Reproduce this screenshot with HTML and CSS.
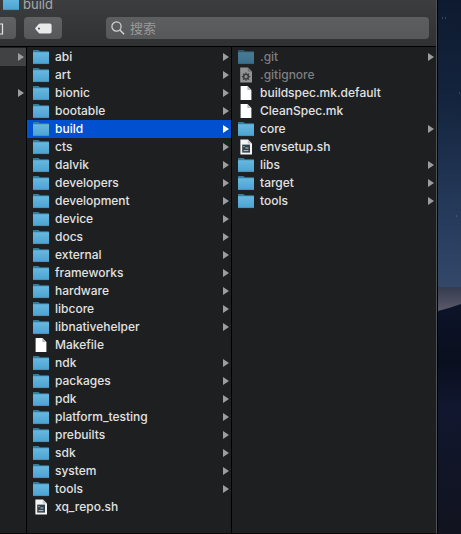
FILE: index.html
```
<!DOCTYPE html>
<html lang="zh-CN">
<head>
<meta charset="UTF-8">
<meta name="viewport" content="width=device-width, initial-scale=1">
<title>build</title>
<link rel="stylesheet" href="styles.css">
</head>
<body>
<svg class="sprite" aria-hidden="true">
  <defs>
    <linearGradient id="folder-fill" x1="0" y1="0" x2="0" y2="1">
      <stop offset="0" stop-color="#67b9df"/>
      <stop offset="1" stop-color="#4ba3d2"/>
    </linearGradient>
  </defs>
  <symbol id="folder" viewBox="0 0 16 16">
    <path d="M0 1.600q0-.6.6-.6h4.800l1.600 1.300h8.400q.6 0 .6.6V6H0z" fill="#347f9f"/>
    <path d="M0 3.200h16v11.300q0 .5-.5.5H.5q-.5 0-.5-.5z" fill="url(#folder-fill)"/>
    <path d="M0 14.600h16" stroke="#3a8fbe" stroke-width=".8"/>
  </symbol>
  <symbol id="doc" viewBox="0 0 16 16">
    <path d="M2.600 1h6.800l4 4v10H2.600z" fill="#fff"/>
    <path d="M9.400 1v4h4z" fill="#b9babb"/>
  </symbol>
  <symbol id="script" viewBox="0 0 16 16">
    <path d="M2.400.4h7.600l4 4v11.200H2.400z" fill="#f4f4f4"/>
    <path d="M9.800.6v3.800h4z" fill="#c4c5c6"/>
    <path d="M4.200 5.600h7.800v8H4.200z" fill="#33424c"/>
    <path d="M5.400 7.600h1.200M7.400 9h3M5.600 11.600h4.800" stroke="#c8d0d4" stroke-width=".9"/>
  </symbol>
  <symbol id="config" viewBox="0 0 16 16">
    <path d="M2.200.4h7.800l4 4v11.200H2.200z" fill="#929394"/>
    <path d="M9.800.4v4.200H14z" fill="#6d6e6f"/>
    <circle cx="8" cy="9.600" r="2.400" fill="none" stroke="#3b3c3e" stroke-width="1.600"/>
    <path d="M8 5.400v1.400M8 12.400v1.400M3.800 9.600h1.400M10.800 9.600h1.400M5 6.600l1 1M10 11.600l1 1M11 6.600l-1 1M6 11.600l-1 1" stroke="#3b3c3e" stroke-width="1.300"/>
  </symbol>
</svg>

<main class="window">
  <header class="toolbar">
    <h1 class="title"><svg class="icon"><use href="#folder"/></svg>build</h1>
    <div class="tools">
      <button class="tool share" type="button" aria-label="共享">
        <svg width="8" height="14" viewBox="0 0 8 14"><path d="M0 3h6.500v10H0" fill="none" stroke="#e6e6e7" stroke-width="1.200"/></svg>
      </button>
      <button class="tool tag" type="button" aria-label="标签">
        <svg width="17" height="11" viewBox="0 0 17 11"><path fill-rule="evenodd" d="M5.200.4h9.600q1.800 0 1.800 1.800v6.600q0 1.800-1.800 1.800H5.200q-.8 0-1.400-.6L.7 6.500q-.9-1 0-2L3.800 1Q4.400.4 5.200.4zM4 4.400a1.100 1.100 0 1 0 .01 0z" fill="#e9e9ea"/></svg>
      </button>
      <label class="search">
        <svg width="14" height="14" viewBox="0 0 14 14"><circle cx="5.500" cy="5.500" r="4.600" fill="none" stroke="#d6d6d7" stroke-width="1.200"/><path d="M8.900 8.900l4.200 4.300" stroke="#d6d6d7" stroke-width="1.400"/></svg>
        <input type="search" placeholder="搜索" aria-label="搜索">
      </label>
    </div>
  </header>

  <div class="columns">
    <ul class="column parent">
      <li class="dir current"></li>
      <li></li>
      <li class="dir"></li>
    </ul>

    <ul class="column">
      <li class="dir"><a href="#"><svg class="icon"><use href="#folder"/></svg>abi</a></li>
      <li class="dir"><a href="#"><svg class="icon"><use href="#folder"/></svg>art</a></li>
      <li class="dir"><a href="#"><svg class="icon"><use href="#folder"/></svg>bionic</a></li>
      <li class="dir"><a href="#"><svg class="icon"><use href="#folder"/></svg>bootable</a></li>
      <li class="dir selected"><a href="#"><svg class="icon"><use href="#folder"/></svg>build</a></li>
      <li class="dir"><a href="#"><svg class="icon"><use href="#folder"/></svg>cts</a></li>
      <li class="dir"><a href="#"><svg class="icon"><use href="#folder"/></svg>dalvik</a></li>
      <li class="dir"><a href="#"><svg class="icon"><use href="#folder"/></svg>developers</a></li>
      <li class="dir"><a href="#"><svg class="icon"><use href="#folder"/></svg>development</a></li>
      <li class="dir"><a href="#"><svg class="icon"><use href="#folder"/></svg>device</a></li>
      <li class="dir"><a href="#"><svg class="icon"><use href="#folder"/></svg>docs</a></li>
      <li class="dir"><a href="#"><svg class="icon"><use href="#folder"/></svg>external</a></li>
      <li class="dir"><a href="#"><svg class="icon"><use href="#folder"/></svg>frameworks</a></li>
      <li class="dir"><a href="#"><svg class="icon"><use href="#folder"/></svg>hardware</a></li>
      <li class="dir"><a href="#"><svg class="icon"><use href="#folder"/></svg>libcore</a></li>
      <li class="dir"><a href="#"><svg class="icon"><use href="#folder"/></svg>libnativehelper</a></li>
      <li><a href="#"><svg class="icon"><use href="#doc"/></svg>Makefile</a></li>
      <li class="dir"><a href="#"><svg class="icon"><use href="#folder"/></svg>ndk</a></li>
      <li class="dir"><a href="#"><svg class="icon"><use href="#folder"/></svg>packages</a></li>
      <li class="dir"><a href="#"><svg class="icon"><use href="#folder"/></svg>pdk</a></li>
      <li class="dir"><a href="#"><svg class="icon"><use href="#folder"/></svg>platform_testing</a></li>
      <li class="dir"><a href="#"><svg class="icon"><use href="#folder"/></svg>prebuilts</a></li>
      <li class="dir"><a href="#"><svg class="icon"><use href="#folder"/></svg>sdk</a></li>
      <li class="dir"><a href="#"><svg class="icon"><use href="#folder"/></svg>system</a></li>
      <li class="dir"><a href="#"><svg class="icon"><use href="#folder"/></svg>tools</a></li>
      <li><a href="#"><svg class="icon"><use href="#script"/></svg>xq_repo.sh</a></li>
    </ul>

    <ul class="column">
      <li class="dir hidden-dir"><a href="#"><svg class="icon"><use href="#folder"/></svg>.git</a></li>
      <li class="hidden-file"><a href="#"><svg class="icon"><use href="#config"/></svg>.gitignore</a></li>
      <li><a href="#"><svg class="icon"><use href="#doc"/></svg>buildspec.mk.default</a></li>
      <li><a href="#"><svg class="icon"><use href="#doc"/></svg>CleanSpec.mk</a></li>
      <li class="dir"><a href="#"><svg class="icon"><use href="#folder"/></svg>core</a></li>
      <li><a href="#"><svg class="icon"><use href="#script"/></svg>envsetup.sh</a></li>
      <li class="dir"><a href="#"><svg class="icon"><use href="#folder"/></svg>libs</a></li>
      <li class="dir"><a href="#"><svg class="icon"><use href="#folder"/></svg>target</a></li>
      <li class="dir"><a href="#"><svg class="icon"><use href="#folder"/></svg>tools</a></li>
    </ul>
  </div>
</main>

<aside class="desktop" aria-hidden="true">
  <svg viewBox="0 0 23 534" preserveAspectRatio="none">
    <defs>
      <linearGradient id="sky" x1="0" y1="0" x2="0" y2="1">
        <stop offset="0" stop-color="#0e1a2f"/>
        <stop offset=".35" stop-color="#14243e"/>
        <stop offset=".75" stop-color="#263b5b"/>
        <stop offset="1" stop-color="#34496a"/>
      </linearGradient>
      <linearGradient id="dune" x1="0" y1="0" x2="0" y2="1">
        <stop offset="0" stop-color="#363b50"/>
        <stop offset="1" stop-color="#5a5a69"/>
      </linearGradient>
      <linearGradient id="sand" x1="0" y1="0" x2="0" y2="1">
        <stop offset="0" stop-color="#0d1429"/>
        <stop offset=".25" stop-color="#0a0f1f"/>
        <stop offset=".45" stop-color="#11172f"/>
        <stop offset="1" stop-color="#11131e"/>
      </linearGradient>
    </defs>
    <path d="M0 0h23v288H0z" fill="url(#sky)"/>
    <path d="M0 287h23v24H0z" fill="url(#dune)"/>
    <path d="M0 311q12-3 23-7v230H0z" fill="url(#sand)"/>
    <path d="M4 18h1M7 18h1M21 93h1M18 216h1" stroke="#5d7190"/>
  </svg>
</aside>
</body>
</html>
```
FILE: styles.css
```
* {
  box-sizing: border-box;
}
body {
  display: flex;
  min-height: 100vh;
  margin: 0;
  background: #000;
  color: #e2e2e3;
  font: 500 12px/18px Inter, "Noto Sans CJK SC", sans-serif;
}
.sprite {
  position: absolute;
  width: 0;
  height: 0;
}
.window {
  display: flex;
  flex: 1;
  flex-direction: column;
  min-width: 0;
  overflow: hidden;
  border-right: 1px solid #505152;
  border-bottom: 1px solid #0a0a0b;
  background: #1e1f21;
}
.icon {
  flex: none;
  width: 16px;
  height: 16px;
}

/* toolbar */
.toolbar {
  padding-bottom: 7px;
  border-bottom: 1px solid #000;
  background: linear-gradient(#3c3d3f, #303133);
}
/* the title row runs up over the top edge */
.title {
  display: flex;
  align-items: flex-end;
  gap: 4px;
  height: 11px;
  margin: 0 0 6px;
  padding-left: 3px;
  color: #a9aaab;
  font-size: 13px;
  font-weight: 400;
  line-height: 14px;
}
.tools {
  display: flex;
  padding-right: 7px;
}
.tool {
  display: flex;
  align-items: center;
  height: 22px;
  padding: 0;
  border: 0;
  border-radius: 4px;
  background: linear-gradient(#616264, #575859);
}
.share {
  width: 16px;
  margin-right: 8px;
  padding-right: 12px;
  border-radius: 0 4px 4px 0;
}
.share svg {
  flex: none;
  margin-left: -4px;
}
.tag {
  justify-content: center;
  width: 38px;
  margin-right: 44px;
}
.search {
  display: flex;
  flex: 1;
  align-items: center;
  gap: 5px;
  min-width: 0;
  height: 22px;
  padding: 0 5px;
  border-radius: 4px;
  background: linear-gradient(#5d5e60, #575859);
}
.search svg {
  flex: none;
}
.search input {
  flex: 1;
  min-width: 0;
  padding: 0;
  border: 0;
  outline: 0;
  background: none;
  color: #e2e2e3;
  font: 400 13px/18px Inter, "Noto Sans CJK SC", sans-serif;
}
.search input::placeholder {
  color: #98999a;
}

/* columns */
.columns {
  display: grid;
  flex: 1;
  grid-template-columns: 27px 205px 1fr;
}
.column {
  min-width: 0;
  margin: 0;
  padding: 1px 0 0;
  border-right: 1px solid #000;
  list-style: none;
}
.column:last-child {
  border-right: 0;
}
.column li {
  display: flex;
  align-items: center;
  height: 18px;
  padding: 0 2px 0 6px;
}
.column a {
  display: flex;
  flex: 1;
  align-items: center;
  gap: 6px;
  min-width: 0;
  color: inherit;
  text-decoration: none;
  white-space: nowrap;
}
.dir::after {
  width: 6px;
  height: 8px;
  margin-left: auto;
  background: #9c9d9e;
  clip-path: polygon(0 0, 100% 50%, 0 100%);
  content: "";
}
.column .current {
  background: #414244;
}
.column .selected {
  background: #0050d0;
  color: #fff;
}
.selected::after {
  background: #fff;
}
.hidden-dir a ,
.hidden-file a {
  color: #7e7f80;
}
.hidden-dir .icon {
  opacity: .6;
}

/* wallpaper */
.desktop {
  display: flex;
  flex: none;
  width: 24px;
  border-left: 1px solid #000;
}
.desktop svg {
  width: 100%;
  height: 100%;
}
```
